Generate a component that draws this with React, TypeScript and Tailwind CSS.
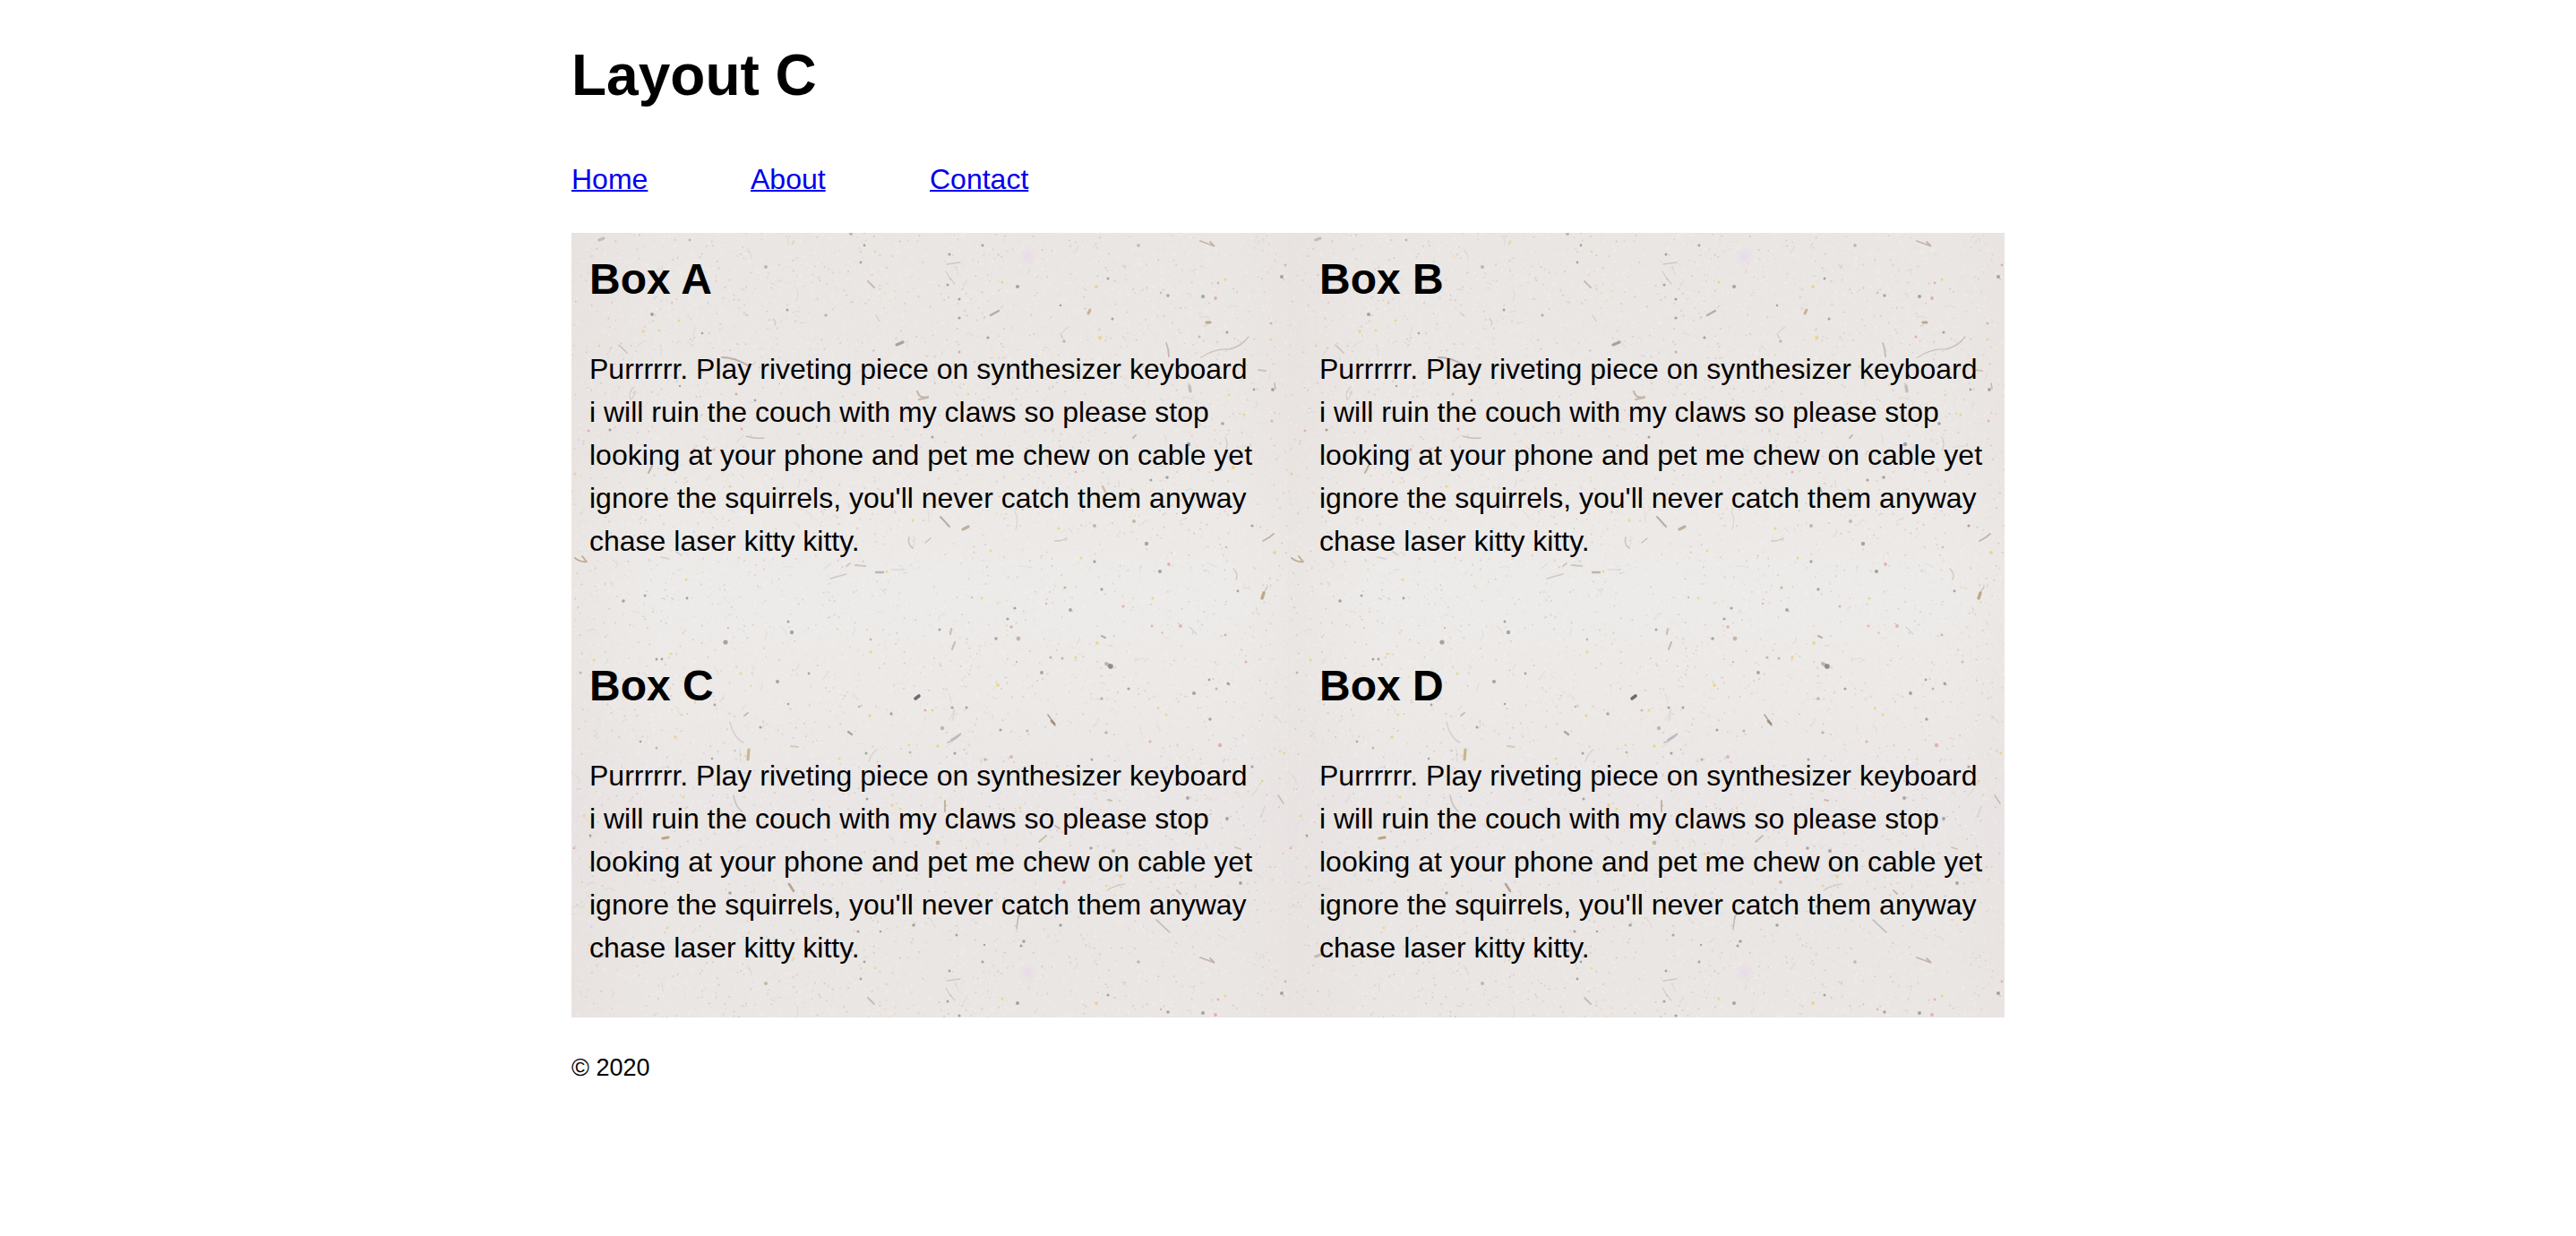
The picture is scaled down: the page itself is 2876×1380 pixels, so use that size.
const TILE = 800;

type Dot = [x: number, y: number, r: number];

/* Larger specks of the paper tile, grouped by colour. */
const darkDots: Dot[] = [
  [90, 91, 2], [241, 86, 1.5], [323, 33, 1.4], [327, 14, 1.4], [498, 60, 2], [433, 74, 1.6], [433, 95, 1.6],
  [465, 117, 1.6], [546, 81, 1.3], [604, 96, 1.5], [666, 70, 1.7], [705, 71, 2], [793, 49, 2], [732, 111, 1.6],
  [783, 175, 1.9], [762, 175, 1.4], [689, 236, 2.2], [665, 273, 1.8], [647, 276, 1.6], [727, 213, 1.8], [422, 24, 1.5],
  [459, 14, 1.4], [420, 58, 1.5], [599, 51, 1.5], [43, 220, 1.6], [205, 187, 1.4], [121, 171, 1.2], [146, 112, 1.3],
  [403, 228, 1.5], [642, 347, 2.2], [584, 367, 1.7], [657, 378, 2.1], [592, 398, 1.7], [495, 419, 1.6],
  [487, 431, 1.6], [557, 421, 1.9], [474, 453, 1.8], [411, 443, 1.5], [525, 491, 1.9], [602, 484, 3],
  [695, 514, 2], [733, 503, 1.6], [622, 509, 1.6], [712, 499, 1.4], [760, 327, 1.6], [744, 400, 1.4], [425, 530, 1.6],
  [441, 530, 1.6], [479, 555, 1.6], [428, 581, 1.6], [713, 543, 1.7], [581, 588, 1.5], [58, 411, 1.8], [82, 405, 1.5],
  [172, 457, 2.6], [246, 446, 2.2], [242, 434, 1.5], [95, 476, 1.5], [101, 476, 1.4], [129, 408, 1.4], [160, 527, 1.4],
  [230, 501, 2], [265, 492, 1.4], [357, 537, 1.7], [242, 526, 1.3], [211, 552, 1.5], [329, 581, 1.5], [77, 568, 1.3],
  [157, 587, 1.3], [605, 690, 2], [580, 687, 1.8], [747, 726, 1.9], [546, 773, 1.8], [505, 791, 1.8], [502, 796, 1.6],
  [430, 784, 1.5], [177, 737, 1.8], [382, 773, 1.8], [320, 780, 1.6], [330, 632, 1.5], [688, 631, 1.9], [732, 654, 1.9],
  [21, 673, 1.4], [760, 596, 1.6], [345, 780, 1.3], [461, 795, 1.2], [590, 752, 1.2],
];

const yellowDots: Dot[] = [
  [80, 110, 1.8], [98, 109, 1.4], [120, 98, 1.4], [31, 126, 1.3], [586, 60, 2], [590, 117, 2.1], [481, 55, 1.6],
  [730, 52, 1.6], [739, 262, 2], [734, 181, 1.4], [751, 203, 1.4], [339, 21, 1.3], [248, 10, 1.4], [177, 283, 1.6],
  [443, 180, 1.3], [627, 288, 1.4], [781, 119, 1.3], [4, 269, 1.6], [476, 615, 1.4], [128, 387, 1.6], [111, 470, 1.5],
  [25, 477, 1.6], [123, 538, 1.4], [116, 563, 1.8], [333, 539, 1.7], [334, 468, 1.7], [299, 587, 1.6], [189, 492, 1.5],
  [352, 378, 1.4], [381, 321, 1.4], [377, 572, 1.4], [468, 355, 1.4], [458, 408, 1.4], [569, 363, 1.5], [544, 330, 1.6],
  [587, 458, 1.9], [563, 474, 1.7], [649, 408, 1.6], [785, 357, 2], [476, 505, 1.9], [403, 533, 1.6], [409, 573, 1.7],
  [664, 538, 1.5], [796, 581, 1.6], [655, 531, 1.3], [358, 639, 1.8], [367, 643, 1.5], [465, 693, 1.6], [613, 719, 1.7],
  [107, 776, 1.4], [501, 642, 1.4], [771, 612, 1.5], [125, 630, 1.4], [455, 739, 1.3], [14, 651, 1.4], [597, 729, 1.3],
];

const redDots: Dot[] = [
  [719, 73, 1.9], [722, 56, 1.4], [658, 67, 1.3], [701, 116, 1.5], [782, 210, 1.5], [137, 242, 1.8], [159, 242, 1.6],
  [19, 221, 1.5], [190, 219, 1.4], [563, 267, 1.6], [245, 306, 1.8], [667, 370, 1.9], [616, 417, 1.6], [680, 439, 1.9],
  [648, 439, 1.4], [491, 440, 1.8], [530, 414, 1.3], [731, 351, 1.3], [724, 572, 2.2], [491, 585, 1.9], [497, 479, 1.2],
  [395, 533, 1.6], [175, 441, 1.2], [539, 703, 1.9], [550, 725, 1.9], [3, 687, 1.3], [781, 101, 1.6], [753, 479, 1.6],
  [646, 568, 1.6], [447, 407, 1.2], [797, 36, 1.4],
];

const brownDots: Dot[] = [
  [633, 14, 1.8], [217, 38, 2], [284, 92, 1.8], [433, 133, 1.5], [312, 1, 2], [550, 121, 1.7], [584, 327, 2],
  [551, 396, 1.6], [499, 453, 2.4], [592, 520, 1.8], [414, 553, 2.2], [409, 681, 2.4], [597, 558, 1.8], [548, 475, 1.6],
  [535, 474, 1.6], [730, 449, 1.4], [509, 556, 1.6], [184, 180, 1.5], [132, 8, 1.4], [462, 588, 1.7], [628, 322, 2],
  [720, 509, 1.5], [734, 504, 1.5], [95, 575, 1.5], [334, 454, 1.4], [321, 529, 1.3], [378, 580, 1.5], [10, 491, 1.5],
];

/* Fibres: path, stroke colour, width, opacity. */
const fibres: [string, string, number, number][] = [
  ["M31 8l5-2", "#98866f", 3, 0.6],
  ["M54 126l8 8", "#a8917d", 1.6, 0.6],
  ["M168 139q14 0 29 9", "#8c7261", 1.8, 0.65],
  ["M363 125l7-3", "#756459", 3, 0.75],
  ["M331 54l7 7", "#9a8376", 2, 0.6],
  ["M386 177q3 9 12 6M388 186l10-2", "#8b7463", 2.2, 0.6],
  ["M195 227q10 3 20 2", "#a3826e", 1.4, 0.6],
  ["M86 268l4-8", "#91775b", 2, 0.7],
  ["M70 172q-7 6-4 14q4-2 5-10", "#a99e94", 1.2, 0.5],
  ["M225 96q4 3 2 7", "#a99b8a", 1.4, 0.5],
  ["M340 92l4 7", "#ad9586", 1.2, 0.5],
  ["M419 35l15-2", "#a99886", 1.4, 0.55],
  ["M418 43q4 8 10 14", "#a99b92", 1.2, 0.5],
  ["M468 92l9-5", "#7d7470", 2.4, 0.7],
  ["M479 84l3-3", "#8f8883", 1, 0.5],
  ["M577 90l2-4", "#a3764a", 3, 0.65],
  ["M702 9l16 6l-5-5", "#987a67", 1.8, 0.65],
  ["M709 100l4 0", "#987d50", 3.2, 0.8],
  ["M664 123q3 7 3 15", "#887771", 1.8, 0.6],
  ["M703 139q15-10 31-9q14-3 22-14", "#a08777", 1.4, 0.55],
  ["M690 171l1 6", "#7d7069", 3.4, 0.5],
  ["M767 153l8 1", "#a3917c", 2.2, 0.6],
  ["M785 168l1 6", "#9a7c68", 1.6, 0.6],
  ["M627 229l3-3", "#9c8154", 2.2, 0.6],
  ["M730 228q4 8 0 15", "#a49b91", 1.2, 0.5],
  ["M593 283l3 6", "#a27a52", 2.2, 0.6],
  ["M549 118l-3-5q6-6 9-8", "#ada59e", 1.2, 0.4],
  ["M412 317l10 11", "#8c7965", 2, 0.75],
  ["M437 331l6-3", "#937a50", 3.2, 0.7],
  ["M495 311q5 9 1 20", "#b0a59e", 1.1, 0.5],
  ["M377 340q-2 8 4 12M395 346l6-5", "#9d8371", 1.6, 0.55],
  ["M4 363q6 5 13 4M12 361l4 5", "#977846", 2, 0.7],
  ["M340 379l8 0", "#908174", 2.4, 0.7],
  ["M289 386q10-3 18-5", "#aa988f", 1.5, 0.6],
  ["M307 372l4-3M317 371l11 1", "#9a8c84", 1.8, 0.55],
  ["M357 376l15 0", "#a8a2a0", 1.2, 0.5],
  ["M100 362l9 2M117 356l6 4", "#b09e90", 1.6, 0.5],
  ["M540 344q8 0 13-3", "#a58d75", 1.4, 0.6],
  ["M739 375q6 5 3 12", "#aa9457", 1.4, 0.55],
  ["M771 408l2-6", "#9b7030", 3.4, 0.75],
  ["M773 402l4-7", "#988b7b", 1.4, 0.6],
  ["M772 344l7-4l5-4", "#9b7556", 1.8, 0.65],
  ["M425 545q3-8 2-14", "#ada096", 1.2, 0.4],
  ["M423 448l1-6M425 465l3-8", "#907a6c", 2.2, 0.55],
  ["M424 566l11-7q-6 7-15 10", "#78808a", 1.7, 0.6],
  ["M384 520l4-3", "#392c3c", 3.6, 0.95],
  ["M592 450l4 2", "#6a6560", 2.2, 0.6],
  ["M597 481l5 3", "#635a58", 4, 0.5],
  ["M532 538q5 7 8 12", "#83705a", 1.7, 0.75],
  ["M536 545l3 3", "#715331", 3, 0.7],
  ["M198 577l-1 11", "#b8944e", 3.2, 0.85],
  ["M193 539l4-3", "#8b8176", 2, 0.6],
  ["M177 546q4 18 15 23", "#aaa49f", 1.4, 0.5],
  ["M245 573l8 1", "#b89d72", 1.8, 0.6],
  ["M309 557l4 3", "#6e625c", 2.4, 0.7],
  ["M332 590q3-9 9-13", "#aaa299", 1.3, 0.5],
  ["M102 676l6-1", "#9d7133", 3.2, 0.8],
  ["M181 628q2 12 9 18", "#a1968e", 1.6, 0.6],
  ["M417 634l0 12", "#a18559", 2, 0.7],
  ["M522 680l8-7", "#a38b5e", 1.8, 0.65],
  ["M789 628l6 9", "#a59060", 1.6, 0.65],
  ["M243 727l5 8", "#8a694d", 2.6, 0.75],
  ["M497 777l2-14l3-3", "#8b858a", 1.6, 0.65],
  ["M653 767l15 14", "#8c8587", 1.6, 0.65],
  ["M598 734q10-6 20-7", "#b1a293", 1.3, 0.6],
  ["M676 734l4 4", "#a47c58", 2, 0.6],
  ["M540 662l5 3", "#996d50", 1.8, 0.6],
  ["M599 633l4 1", "#a48657", 2, 0.6],
  ["M741 686l6 2", "#b08a63", 1.8, 0.6],
  ["M770 652l4-12", "#aba097", 1.4, 0.4],
  ["M660 315l3-2M690 440l8 8", "#a8a19d", 1.3, 0.5],
];

/* Small repeatable generator, so the scattered grain is the same on every render. */
function makeRandom(seed: number) {
  let s = seed;
  return () => {
    s = (s * 1664525 + 1013904223) % 4294967296;
    return s / 4294967296;
  };
}

function scatter(seed: number, count: number) {
  const rnd = makeRandom(seed);
  let d = "";
  for (let i = 0; i < count; i++) {
    const x = Math.round(rnd() * TILE * 10) / 10;
    const y = Math.round(rnd() * TILE * 10) / 10;
    d += `M${x} ${y}h.1`;
  }
  return d;
}

function scatterHairs(seed: number, count: number) {
  const rnd = makeRandom(seed);
  let d = "";
  for (let i = 0; i < count; i++) {
    const x = Math.round(rnd() * TILE);
    const y = Math.round(rnd() * TILE);
    const a = rnd() * Math.PI * 2;
    const len = 4 + rnd() * 9;
    const dx = Math.round(Math.cos(a) * len);
    const dy = Math.round(Math.sin(a) * len);
    d += `M${x} ${y}q${Math.round(dx / 2 + rnd() * 4)} ${Math.round(dy / 2 - rnd() * 4)} ${dx} ${dy}`;
  }
  return d;
}

const grain: [string, string, number, number][] = [
  [scatter(11, 5000), "#d8d2cf", 2, 0.28],
  [scatter(12, 4000), "#ffffff", 2.4, 0.18],
  [scatter(13, 800), "#a39c99", 1.8, 0.28],
  [scatter(14, 380), "#8c8988", 2, 0.28],
  [scatter(15, 300), "#e8ca78", 2.2, 0.36],
  [scatter(16, 200), "#d7a29a", 2.2, 0.36],
  [scatter(17, 260), "#b59f8c", 2.2, 0.32],
  [scatter(18, 120), "#a3abc0", 2.2, 0.34],
  [scatterHairs(19, 170), "#bdb3ab", 1.2, 0.26],
];

const dotGroups: [Dot[], string, number][] = [
  [darkDots, "#6b6868", 0.55],
  [yellowDots, "#eec648", 0.58],
  [redDots, "#d9727a", 0.48],
  [brownDots, "#a1815f", 0.5],
];

function PaperTexture() {
  return (
    <svg className="absolute inset-0 h-full w-full" aria-hidden="true">
      <defs>
        <linearGradient id="paper-tone" x1="0" y1="0" x2="0" y2="1">
          <stop offset="0" stopColor="#eae6e4" />
          <stop offset="0.3" stopColor="#ebe7e5" />
          <stop offset="0.5" stopColor="#edebe9" />
          <stop offset="0.65" stopColor="#ece9e7" />
          <stop offset="0.8" stopColor="#eae6e5" />
          <stop offset="1" stopColor="#eae6e4" />
        </linearGradient>
        <linearGradient id="paper-edge" x1="0" y1="0" x2="1" y2="0">
          <stop offset="0" stopColor="#e4dddb" stopOpacity="0.35" />
          <stop offset="0.12" stopColor="#e4dddb" stopOpacity="0" />
          <stop offset="0.92" stopColor="#e4dddb" stopOpacity="0" />
          <stop offset="1" stopColor="#e4dddb" stopOpacity="0.25" />
        </linearGradient>
        <radialGradient id="paper-stain">
          <stop offset="0" stopColor="#e8d8ea" stopOpacity="0.8" />
          <stop offset="1" stopColor="#e8d8ea" stopOpacity="0" />
        </radialGradient>
        <pattern id="paper" width={TILE} height={TILE} patternUnits="userSpaceOnUse">
          <rect width={TILE} height={TILE} fill="url(#paper-tone)" />
          <rect width={TILE} height={TILE} fill="url(#paper-edge)" />
          <circle cx="509" cy="26" r="11" fill="url(#paper-stain)" />
          {grain.map(([d, stroke, width, opacity], i) => (
            <path key={i} d={d} fill="none" stroke={stroke} strokeWidth={width} opacity={opacity} strokeLinecap="round" />
          ))}
          <g opacity="0.72">
            {fibres.map(([d, stroke, width, opacity], i) => (
              <path key={i} d={d} fill="none" stroke={stroke} strokeWidth={width} opacity={opacity} strokeLinecap="round" />
            ))}
          </g>
          {dotGroups.map(([dots, fill, opacity]) => (
            <g key={fill} fill={fill} opacity={opacity}>
              {dots.map(([x, y, r], i) => (
                <circle key={i} cx={x} cy={y} r={r} />
              ))}
            </g>
          ))}
        </pattern>
      </defs>
      <rect width="100%" height="100%" fill="url(#paper)" />
    </svg>
  );
}

const links = ["Home", "About", "Contact"];
const boxes = ["Box A", "Box B", "Box C", "Box D"];
const text =
  "Purrrrrr. Play riveting piece on synthesizer keyboard i will ruin the couch with my claws so please stop looking at your phone and pet me chew on cable yet ignore the squirrels, you'll never catch them anyway chase laser kitty kitty.";

export default function App() {
  return (
    <div className="mx-auto max-w-[1600px] bg-white font-['Liberation_Sans',Arial,sans-serif] text-[32px] leading-[48px] text-black">
      <header className="pt-9">
        <h1 className="text-[64px] leading-[96px] font-bold">Layout C</h1>
      </header>
      <nav className="mt-11">
        <ul className="flex">
          {links.map((label) => (
            <li key={label} className="w-[200px]">
              <a href="#" className="text-[#0000ee] underline decoration-2">
                {label}
              </a>
            </li>
          ))}
        </ul>
      </nav>
      <main className="relative mt-9 bg-[#eae7e5]">
        <PaperTexture />
        <div className="relative grid grid-cols-2 gap-x-[30px] gap-y-8">
          {boxes.map((title) => (
            <section key={title} className="px-5 pt-4 pb-[54px]">
              <h2 className="text-[48px] leading-[72px] font-bold">{title}</h2>
              <p className="mt-10">{text}</p>
            </section>
          ))}
        </div>
      </main>
      <footer className="mt-8">
        <p className="text-[27px] leading-[48px]">© 2020</p>
      </footer>
    </div>
  );
}
